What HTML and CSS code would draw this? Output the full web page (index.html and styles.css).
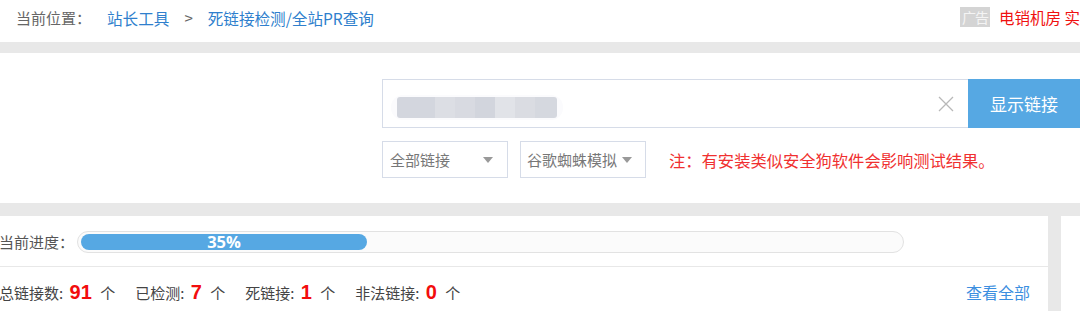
FILE: index.html
```html
<!DOCTYPE html>
<html lang="zh">
<head>
<meta charset="utf-8">
<link rel="stylesheet" href="styles.css">
</head>
<body>
<div class="crumb">
  <div class="crumb-left">
    <span class="crumb-label">当前位置：</span>
    <a class="crumb-link">站长工具</a>
    <span class="crumb-sep">&gt;</span>
    <a class="crumb-link">死链接检测/全站PR查询</a>
  </div>
  <div class="ad">
    <span class="ad-tag">广告</span>
    <span class="ad-text">电销机房 实</span>
  </div>
</div>
<div class="band band-top"></div>
<div class="search-panel">
  <div class="search-inner">
    <div class="input-row">
      <div class="input-box">
        <div class="blur-wrap"><div class="blur"></div></div>
        <svg class="clear" width="16" height="16" viewBox="0 0 16 16"><path d="M1 1 L15 15 M15 1 L1 15" stroke="#b8b8b8" stroke-width="1.3" fill="none"/></svg>
      </div>
      <div class="btn">显示链接</div>
    </div>
    <div class="opt-row">
      <div class="sel sel-a"><span>全部链接</span><i class="arrow"></i></div>
      <div class="sel sel-b"><span>谷歌蜘蛛模拟</span><i class="arrow"></i></div>
      <div class="note">注：有安装类似安全狗软件会影响测试结果。</div>
    </div>
  </div>
</div>
<div class="band band-mid"></div>
<div class="result">
  <div class="result-main">
    <div class="progress-row">
      <span class="prog-label">当前进度：</span>
      <div class="track"><div class="fill" style="width:286px">35%</div></div>
    </div>
    <div class="stats-row">
      <div class="stats">
        <span class="stat">总链接数: <b>91</b> 个</span>
        <span class="stat">已检测: <b>7</b> 个</span>
        <span class="stat">死链接: <b>1</b> 个</span>
        <span class="stat">非法链接: <b>0</b> 个</span>
      </div>
      <a class="view-all">查看全部</a>
    </div>
  </div>
  <div class="result-gap"></div>
  <div class="result-side"></div>
</div>
</body>
</html>
```
FILE: styles.css
```css
html, body {
  margin: 0;
  padding: 0;
  background: #fff;
  font-family: "Noto Sans CJK SC", "Microsoft YaHei", sans-serif;
  overflow: hidden;
}
.crumb {
  height: 42px;
  display: flex;
  justify-content: space-between;
  align-items: center;
  font-size: 15px;
  padding-left: 16px;
}
.crumb-left {
  display: flex;
  align-items: center;
  margin-top: -7px;
}
.crumb-label { color: #666; }
.crumb-link { color: #2f7fcd; font-size: 15.6px; }
.crumb-label + .crumb-link { margin-left: 16px; }
.crumb-sep { color: #666; margin: 0 15px 0 15px; }
.ad {
  display: flex;
  align-items: center;
  margin-top: -8px;
  white-space: nowrap;
  width: 120px;
  flex-shrink: 0;
}
.ad-tag {
  background: #d4d4d4;
  color: #f4f4f4;
  font-size: 14px;
  width: 35px;
  height: 20px;
  line-height: 20px;
  text-align: center;
  overflow: hidden;
  letter-spacing: -1px;
}
.ad-text {
  color: #f01010;
  font-size: 15.5px;
  margin-left: 9px;
}
.band { background: #e8e8e8; }
.band-top { height: 11px; }
.band-mid { height: 13px; }
.search-panel {
  height: 150px;
  display: flex;
  justify-content: flex-end;
}
.search-inner {
  width: 698px;
  padding-top: 26px;
}
.input-row {
  display: flex;
  height: 49px;
}
.input-box {
  flex: 1;
  border: 1px solid #d6dce8;
  border-right: none;
  display: flex;
  align-items: center;
  justify-content: space-between;
  padding: 0 14px 0 8px;
}
.blur-wrap {
  padding: 2px 6px;
  border-radius: 12px;
  background: #fbfbfd;
  margin-top: 8px;
}
.blur {
  width: 160px;
  height: 21px;
  border-radius: 3px;
  background: linear-gradient(90deg, #d3d6de 0, #d3d6de 38px, #dcdee4 38px, #dcdee4 58px, #d8dae1 58px, #d8dae1 78px, #d2d5dd 78px, #d2d5dd 98px, #e1e3e8 98px, #e1e3e8 118px, #dadce2 118px, #dadce2 138px, #d5d8df 138px);
  filter: blur(0.6px);
}
.btn {
  width: 112px;
  background: #56a8e3;
  color: #fff;
  font-size: 17px;
  display: flex;
  align-items: center;
  justify-content: center;
}
.opt-row {
  display: flex;
  align-items: center;
  margin-top: 13px;
  height: 37px;
}
.sel {
  box-sizing: border-box;
  height: 37px;
  border: 1px solid #d6dce8;
  display: flex;
  align-items: center;
  justify-content: space-between;
  color: #777;
  font-size: 15px;
  padding: 0 12px 0 7px;
}
.sel-a { width: 126px; padding-right: 14px; }
.sel-b { width: 126px; margin-left: 12px; padding-right: 13px; padding-left: 6px; }
.arrow {
  width: 0;
  height: 0;
  border-left: 5px solid transparent;
  border-right: 5px solid transparent;
  border-top: 6px solid #999;
}
.note {
  color: #f03030;
  font-size: 16.3px;
  margin-left: 23px;
}
.result {
  display: flex;
  height: 95px;
}
.result-main {
  width: 1048px;
  flex-shrink: 0;
}
.result-gap {
  width: 13px;
  flex-shrink: 0;
  background: #e8e8e8;
}
.result-side { flex: 1; }
.progress-row {
  height: 50px;
  border-bottom: 1px solid #e8e8e8;
  display: flex;
  align-items: center;
  font-size: 15px;
  color: #555;
}
.prog-label { width: 78px; flex-shrink: 0; margin-left: -1px; }
.track {
  width: 827px;
  box-sizing: border-box;
  height: 22px;
  border: 1px solid #e2e2e2;
  border-radius: 11px;
  background: #fbfbfb;
  padding: 2px 3px;
  margin-top: 1px;
}
.fill {
  height: 16px;
  border-radius: 8px;
  background: #56a8e3;
  color: #fff;
  font-size: 16.5px;
  font-weight: bold;
  line-height: 16px;
  text-align: center;
  font-family: "Open Sans", "Noto Sans", sans-serif;
}
.stats-row {
  height: 44px;
  display: flex;
  align-items: center;
  justify-content: space-between;
  padding-right: 18px;
  padding-top: 6px;
  box-sizing: border-box;
}
.stats {
  display: flex;
  font-size: 15px;
  color: #444;
  align-items: baseline;
  margin-left: -1px;
}
.stat { margin-right: 20px; white-space: nowrap; }
.stat b {
  color: #f20d0d;
  font-size: 20px;
  font-family: "Liberation Sans", Arial, sans-serif;
  margin: 0 5px 0 3px;
}
.view-all {
  color: #3c8fe0;
  font-size: 16px;
}
```
